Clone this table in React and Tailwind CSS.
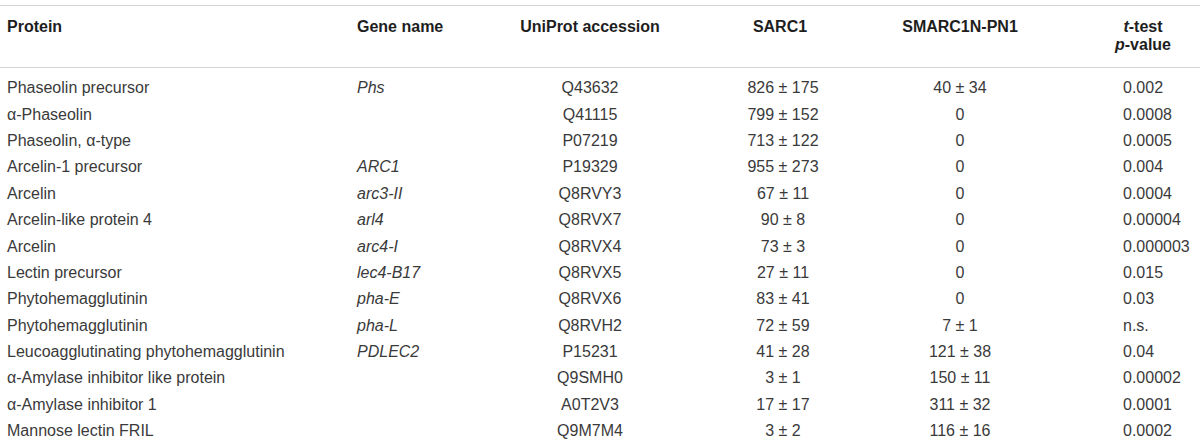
const rows = [
  ["Phaseolin precursor", "Phs", "Q43632", "826 ± 175", "40 ± 34", "0.002"],
  ["α-Phaseolin", "", "Q41115", "799 ± 152", "0", "0.0008"],
  ["Phaseolin, α-type", "", "P07219", "713 ± 122", "0", "0.0005"],
  ["Arcelin-1 precursor", "ARC1", "P19329", "955 ± 273", "0", "0.004"],
  ["Arcelin", "arc3-II", "Q8RVY3", "67 ± 11", "0", "0.0004"],
  ["Arcelin-like protein 4", "arl4", "Q8RVX7", "90 ± 8", "0", "0.00004"],
  ["Arcelin", "arc4-I", "Q8RVX4", "73 ± 3", "0", "0.000003"],
  ["Lectin precursor", "lec4-B17", "Q8RVX5", "27 ± 11", "0", "0.015"],
  ["Phytohemagglutinin", "pha-E", "Q8RVX6", "83 ± 41", "0", "0.03"],
  ["Phytohemagglutinin", "pha-L", "Q8RVH2", "72 ± 59", "7 ± 1", "n.s."],
  ["Leucoagglutinating phytohemagglutinin", "PDLEC2", "P15231", "41 ± 28", "121 ± 38", "0.04"],
  ["α-Amylase inhibitor like protein", "", "Q9SMH0", "3 ± 1", "150 ± 11", "0.00002"],
  ["α-Amylase inhibitor 1", "", "A0T2V3", "17 ± 17", "311 ± 32", "0.0001"],
  ["Mannose lectin FRIL", "", "Q9M7M4", "3 ± 2", "116 ± 16", "0.0002"],
];

const cols = "grid grid-cols-[350px_150px_180px_206px_148px_1fr]";

export default function App() {
  return (
    <div className="w-[1200px] h-[448px] bg-white pt-[5px] text-[16px] text-[#3a3a3a] font-['Liberation_Sans',Arial,sans-serif] overflow-hidden">
      <div className={`${cols} border-t border-b border-[#d4d4d4] font-bold text-[#1e1e1e] leading-[18px] pt-[12px] pb-[13px]`}>
        <div className="pl-[7px]">Protein</div>
        <div className="pl-[7px]">Gene name</div>
        <div className="text-center">UniProt accession</div>
        <div className="text-center pr-[6px]">SARC1</div>
        <div className="text-center">SMARC1N-PN1</div>
        <div className="text-center pl-[52px]">
          <div><i>t</i>-test</div>
          <div><i>p</i>-value</div>
        </div>
      </div>
      <div className="pt-[7px]">
        {rows.map((r, i) => (
          <div key={i} className={`${cols} h-[26.4px] items-center`}>
            <div className="pl-[7px] whitespace-nowrap">{r[0]}</div>
            <div className="pl-[7px] italic">{r[1]}</div>
            <div className="text-center">{r[2]}</div>
            <div className="text-center">{r[3]}</div>
            <div className="text-center">{r[4]}</div>
            <div className="pl-[89px]">{r[5]}</div>
          </div>
        ))}
      </div>
    </div>
  );
}
